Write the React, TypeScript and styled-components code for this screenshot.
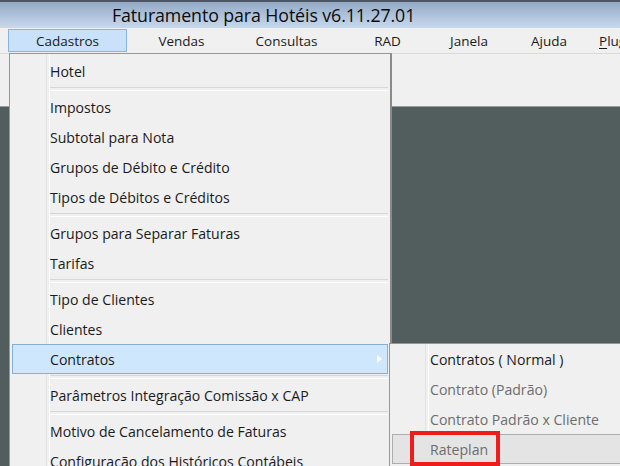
import React from "react";
import styled, { createGlobalStyle } from "styled-components";

const Global = createGlobalStyle`
  html, body { margin: 0; padding: 0; background: #f0f0f0; }
  body { font-family: "Open Sans", "Noto Sans", sans-serif; }
  * { box-sizing: border-box; }
`;

const Window = styled.div`
  position: relative;
  width: 620px;
  height: 466px;
  overflow: hidden;
  display: flex;
  flex-direction: column;
  background: #f0f0f0;
  font-family: "Open Sans", "Noto Sans", sans-serif;
  color: #1a1a1a;
`;

const TitleBar = styled.div`
  height: 28px;
  flex: none;
  border-top: 2px solid #4d5665;
  background: linear-gradient(#94a9c4, #c7d9ee);
  display: flex;
  align-items: center;
  padding-left: 112px;
  font-size: 17.8px;
  color: #0c0c0c;
  letter-spacing: -0.1px;
`;

const MenuBar = styled.div`
  height: 25px;
  flex: none;
  display: flex;
  align-items: stretch;
  padding: 1px 0 1px 8px;
  background: #f0f0f0;
  font-size: 13.5px;
`;

const MenuTitle = styled.div<{ $w: number; $active?: boolean; $start?: boolean }>`
  width: ${(p) => p.$w}px;
  flex: none;
  display: flex;
  align-items: center;
  justify-content: ${(p) => (p.$start ? "flex-start" : "center")};
  border: 1px solid ${(p) => (p.$active ? "#86b4e4" : "transparent")};
  background: ${(p) => (p.$active ? "#c9e2f9" : "transparent")};
  white-space: nowrap;
  u { text-decoration: underline; text-underline-offset: 2px; }
`;

const ToolArea = styled.div`
  height: 54px;
  flex: none;
  border-top: 1px solid #dadada;
  border-bottom: 1px solid #9d9d9d;
  background: #f0f0f0;
`;

const Desktop = styled.div`
  flex: 1;
  background: #525e5e;
`;

const Menu = styled.div<{
  $left: number;
  $top: number;
  $width: number;
  $gutter: number;
  $padTop: number;
}>`
  position: absolute;
  left: ${(p) => p.$left}px;
  top: ${(p) => p.$top}px;
  width: ${(p) => p.$width}px;
  background: #f0f0f0;
  border: 1px solid #979797;
  border-right: 2px solid #8a8a8a;
  padding: ${(p) => p.$padTop}px 2px 2px 2px;
  font-size: 14.1px;
  &::before {
    content: "";
    position: absolute;
    top: 0;
    bottom: 0;
    left: ${(p) => p.$gutter}px;
    width: 2px;
    border-left: 1px solid #e2e3e3;
    border-right: 1px solid #ffffff;
  }
`;

const Item = styled.div<{ $hot?: boolean; $disabled?: boolean; $gray?: boolean; $indent: number }>`
  position: relative;
  height: 30px;
  display: flex;
  align-items: center;
  padding-left: ${(p) => p.$indent}px;
  color: ${(p) => (p.$disabled ? "#6d6d6d" : "#1a1a1a")};
  border: 1px solid
    ${(p) => (p.$hot ? "#84b0dd" : p.$gray ? "#adadad" : "transparent")};
  background: ${(p) => (p.$hot ? "#cfe7fc" : p.$gray ? "#e4e4e4" : "transparent")};
  white-space: nowrap;
  z-index: 1;
`;

const Arrow = styled.span`
  position: absolute;
  right: 5px;
  top: 10px;
  width: 0;
  height: 0;
  border-top: 4.5px solid transparent;
  border-bottom: 4.5px solid transparent;
  border-left: 5px solid #ffffff;
`;

const Separator = styled.div<{ $indent: number }>`
  height: 6px;
  display: flex;
  align-items: center;
  padding-left: ${(p) => p.$indent}px;
  &::after {
    content: "";
    flex: 1;
    height: 2px;
    border-top: 1px solid #d7d7d7;
    border-bottom: 1px solid #ffffff;
  }
`;

const Callout = styled.div`
  position: absolute;
  left: 410px;
  top: 431px;
  width: 90px;
  height: 35px;
  border: 4px solid #ee1c1c;
  z-index: 5;
`;

type Entry = { label?: string; sep?: boolean; hot?: boolean; sub?: boolean };

const main: Entry[] = [
  { label: "Hotel" },
  { sep: true },
  { label: "Impostos" },
  { label: "Subtotal para Nota" },
  { label: "Grupos de Débito e Crédito" },
  { label: "Tipos de Débitos e Créditos" },
  { sep: true },
  { label: "Grupos para Separar Faturas" },
  { label: "Tarifas" },
  { sep: true },
  { label: "Tipo de Clientes" },
  { label: "Clientes" },
  { label: "Contratos", hot: true, sub: true },
  { sep: true },
  { label: "Parâmetros Integração Comissão x CAP" },
  { sep: true },
  { label: "Motivo de Cancelamento de Faturas" },
  { label: "Configuração dos Históricos Contábeis" },
];

const menus = [
  { label: "Cadastros", w: 119, active: true },
  { label: "Vendas", w: 109 },
  { label: "Consultas", w: 101 },
  { label: "RAD", w: 101 },
  { label: "Janela", w: 62 },
  { label: "Ajuda", w: 98 },
];

export default function App() {
  return (
    <>
      <Global />
      <Window>
        <TitleBar>Faturamento para Hotéis v6.11.27.01</TitleBar>
        <MenuBar>
          {menus.map((m) => (
            <MenuTitle key={m.label} $w={m.w} $active={m.active}>
              {m.label}
            </MenuTitle>
          ))}
          <MenuTitle $w={60} $start>
            <span>
              <u>P</u>lugins
            </span>
          </MenuTitle>
        </MenuBar>
        <ToolArea />
        <Desktop />

        <Menu $left={9} $top={53} $width={383} $gutter={36} $padTop={2}>
          {main.map((e, i) =>
            e.sep ? (
              <Separator key={i} $indent={37} />
            ) : (
              <Item key={i} $hot={e.hot} $indent={37}>
                {e.label}
                {e.sub && <Arrow />}
              </Item>
            )
          )}
        </Menu>

        <Menu $left={389} $top={343} $width={260} $gutter={35} $padTop={0}>
          <Item $indent={37}>Contratos ( Normal )</Item>
          <Item $indent={37} $disabled>
            Contrato (Padrão)
          </Item>
          <Item $indent={37} $disabled>
            Contrato Padrão x Cliente
          </Item>
          <Item $indent={37} $disabled $gray>
            Rateplan
          </Item>
        </Menu>
        <Callout />
      </Window>
    </>
  );
}
